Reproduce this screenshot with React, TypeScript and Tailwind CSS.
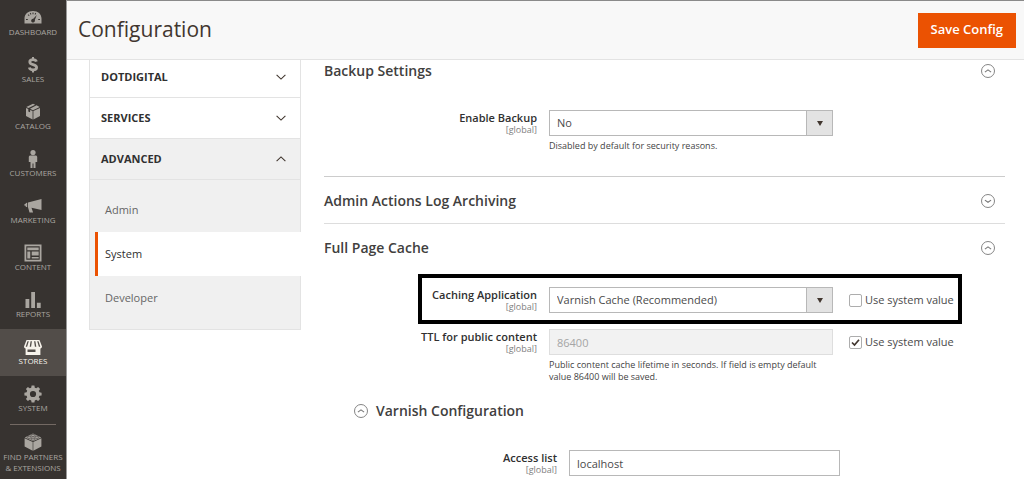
import { useState, type ReactNode } from "react";
import { clsx } from "clsx";

type IconProps = { children: ReactNode };

function Glyph({ children }: IconProps) {
  return (
    <svg viewBox="0 0 18 18" className="h-[18px] w-[18px]" fill="currentColor" aria-hidden="true">
      {children}
    </svg>
  );
}

const icons = {
  dashboard: (
    <Glyph>
      <path
        fillRule="evenodd"
        d="M.5 14.500V9.500C.5 5 4 2 9 2s8.500 3 8.500 7.500v5z M7.200 11.300a1.900 1.900 0 1 0 3.600-.4l2-5-3.500 3.900a1.900 1.900 0 0 0-2.100 1.500z M2 10v1h1.800v-1z M14.200 10v1H16v-1z M8.500 3.500v1.700h1V3.500z M3.700 5.900l1.200 1.200.7-.7-1.200-1.200z M5.800 4.200l.8 1.500.8-.4-.7-1.500z M11.300 3.800l-.7 1.500.8.400.8-1.500z"
      />
    </Glyph>
  ),
  sales: (
    <Glyph>
      <path
        fill="none"
        stroke="currentColor"
        strokeWidth="2.800"
        d="M12.400 5.600C12 4.300 10.700 3.700 9 3.700c-1.900 0-3.200.9-3.200 2.300 0 3.600 6.800 1.700 6.800 5.500 0 1.500-1.400 2.400-3.500 2.400-2 0-3.400-.8-3.800-2.400"
      />
      <path d="M8 1h2v3H8z M8 13.500h2v3H8z" />
    </Glyph>
  ),
  catalog: (
    <Glyph>
      <path d="M9 .8l2.200.9-6.700 3.300L2.300 4z M12.500 2.300L15.700 4 9 7.200 6 5.800z M2 5l2.300 1v2.500l1.800.8V6.900L8.600 8v8.500L2 13z M16 5v8l-6.600 3.500V8z" />
    </Glyph>
  ),
  customers: (
    <Glyph>
      <circle cx="9" cy="2.600" r="2.600" />
      <path d="M6.500 5.600h5c1 0 1.700.6 1.700 1.500v5h-1.700V18H9.500v-4.500h-1V18h-2v-5.900H4.800v-5c0-.9.7-1.500 1.700-1.500z" />
    </Glyph>
  ),
  marketing: (
    <Glyph>
      <path d="M17.500 2v11L7.500 10.800l1.600 4.700H5.500L4 10.300V5.600z M3.200 5.700v4.500L1.700 9.800V8.700H.5V7h1.200V5.900z" />
    </Glyph>
  ),
  content: (
    <Glyph>
      <path fillRule="evenodd" d="M.5.500h17v17H.5z M2.300 2.300v13.400h13.400V2.300z" />
      <path d="M3.300 3.500h11.400v2.700H3.300z M3.300 7.600h3v7h-3z M7.700 7.600h7v4h-7z M7.700 12.900h7v1.700h-7z" />
    </Glyph>
  ),
  reports: (
    <Glyph>
      <path d="M1.500 8h3.800v9H1.500z M7.200 1H11v16H7.200z M12.900 11.800h3.800V17h-3.800z" />
    </Glyph>
  ),
  stores: (
    <Glyph>
      <path
        fillRule="evenodd"
        d="M2.500 2h13l2.500 6.500c0 1-.6 1.700-1.600 1.900V17H1.600v-6.600C.6 10.200 0 9.500 0 8.500z M3.500 3.200L1.700 8.800h1.400l1.700-5.600z M6.600 3.200L5.700 8.800h1.400l.8-5.600z M10.100 3.200l.8 5.600h1.400l-.9-5.600z M13.200 3.200l1.700 5.600h1.400l-1.800-5.600z M3.500 11.500v2.600h8v-2.600z"
      />
    </Glyph>
  ),
  system: (
    <Glyph>
      <path
        fillRule="evenodd"
        d="M7.600.5h2.800l.4 2.200 1.500.6 1.800-1.300 2 2-1.300 1.800.6 1.500 2.200.4v2.700l-2.200.4-.6 1.500 1.300 1.800-2 2-1.800-1.300-1.500.6-.4 2.200H7.600l-.4-2.200-1.500-.6-1.800 1.300-2-2 1.300-1.800-.6-1.500-2.200-.4V7.700l2.200-.4.6-1.500L1.900 4l2-2 1.800 1.300 1.500-.6z M9 5.900a3.100 3.100 0 1 0 0 6.200 3.100 3.100 0 0 0 0-6.200z"
      />
    </Glyph>
  ),
  partners: (
    <Glyph>
      <path d="M.6 5.200L8.700 9v8.700L.6 13.400z M17.400 5.200L9.300 9v8.700l8.100-4.300z" />
      <path d="M.8 4.500L9 .6l8.200 3.900L9 8.300z" />
      <g stroke="#373330" strokeWidth=".6">
        <ellipse cx="9" cy="2.400" rx="2" ry="1.100" />
        <ellipse cx="5.200" cy="4.300" rx="2" ry="1.100" />
        <ellipse cx="12.800" cy="4.300" rx="2" ry="1.100" />
        <ellipse cx="9" cy="6.200" rx="2" ry="1.100" />
      </g>
    </Glyph>
  ),
};

const menu = [
  { label: "Dashboard", icon: icons.dashboard },
  { label: "Sales", icon: icons.sales },
  { label: "Catalog", icon: icons.catalog },
  { label: "Customers", icon: icons.customers },
  { label: "Marketing", icon: icons.marketing },
  { label: "Content", icon: icons.content },
  { label: "Reports", icon: icons.reports },
  { label: "Stores", icon: icons.stores, active: true },
  { label: "System", icon: icons.system },
];

function AdminMenu() {
  return (
    <nav className="w-[67px] shrink-0 border-r border-[#999] bg-[#373330] text-center text-[8px] leading-[10px] text-[#aaa6a0] uppercase">
      {menu.map((m) => (
        <a
          key={m.label}
          href="#"
          className={clsx(
            "flex h-[47px] flex-col items-center pt-[9px]",
            m.active && "bg-[#524d49] text-[#f7f3eb]",
          )}
        >
          {m.icon}
          <span>{m.label}</span>
        </a>
      ))}
      <div className="mx-[10px] mt-px border-t border-[#736963]" />
      <a href="#" className="flex flex-col items-center pt-2 leading-[11px]">
        {icons.partners}
        <span>
          Find Partners
          <br />
          &amp; Extensions
        </span>
      </a>
    </nav>
  );
}

function Chevron({ up }: { up?: boolean }) {
  return (
    <svg viewBox="0 0 10 6" className="h-[6px] w-[10px]" fill="none" stroke="#41362f" strokeWidth="1.100" aria-hidden="true">
      <path d={up ? "M.6 5.200L5 .9l4.400 4.300" : "M.6.8L5 5.100 9.400.8"} />
    </svg>
  );
}

function Toggle({ up }: { up?: boolean }) {
  return (
    <svg viewBox="0 0 14 14" className="h-[14px] w-[14px] shrink-0" fill="none" stroke="#777" aria-hidden="true">
      <circle cx="7" cy="7" r="6.500" strokeWidth=".9" />
      <path d={up ? "M3.900 8.100L7 5.900l3.100 2.200" : "M3.900 6.100L7 8.300l3.100-2.200"} strokeWidth="1.100" />
    </svg>
  );
}

function ConfigTabs() {
  return (
    <nav className="-mt-1 w-[212px] shrink-0 border border-[#e3e3e3] text-[#303030]">
      {["Dotdigital", "Services", "Advanced"].map((t) => {
        const open = t === "Advanced";
        return (
          <button
            key={t}
            aria-expanded={open}
            className={clsx(
              "flex h-[41px] w-full items-center justify-between border-b border-[#e3e3e3] pr-[14px] pl-[11px] text-[11px] font-bold uppercase",
              open && "bg-[#f0f0f0]",
            )}
          >
            {t}
            <Chevron up={open} />
          </button>
        );
      })}
      <ul className="bg-[#f0f0f0] pt-2 pb-[9px] text-[11px]">
        {["Admin", "System", "Developer"].map((t) => (
          <li key={t}>
            <a
              href="#"
              className={clsx(
                "ml-[5px] flex h-11 items-center border-l-3 pl-[7px]",
                t === "System"
                  ? "-mr-px border-[#eb5202] bg-white text-[#303030]"
                  : "border-transparent text-[#666]",
              )}
            >
              {t}
            </a>
          </li>
        ))}
      </ul>
    </nav>
  );
}

function SectionHead({ title, up }: { title: string; up?: boolean }) {
  return (
    <h2>
      <button className="flex w-full items-center justify-between pr-[10px] text-left text-[14px] leading-[20px] font-semibold text-[#41403e]">
        {title}
        <Toggle up={up} />
      </button>
    </h2>
  );
}

type FieldProps = {
  id: string;
  label: string;
  note?: string;
  nested?: boolean;
  marked?: boolean;
  system?: boolean;
  onSystem?: (v: boolean) => void;
  children: ReactNode;
};

function Field({ id, label, note, nested, marked, system, onSystem, children }: FieldProps) {
  return (
    <div
      className={clsx(
        "relative grid gap-x-3",
        nested ? "grid-cols-[203fr_271fr_153fr]" : "grid-cols-[213fr_284fr_160fr]",
      )}
    >
      {marked && (
        <div className="pointer-events-none absolute -top-[13px] right-[43px] -bottom-[11px] left-[94px] border-4 border-black" />
      )}
      <label htmlFor={id} className="pt-px text-right text-[11px] leading-[14px] font-semibold text-[#303030]">
        {label}
        <span className="block text-[9px] leading-[9px] font-normal text-[#808080]">[global]</span>
      </label>
      <div>
        {children}
        {note && <p className="mt-1 text-[9px] leading-[12px] text-[#444]">{note}</p>}
      </div>
      {onSystem && (
        <label className="flex h-[26px] items-center gap-[3px] pl-1 text-[11px] text-[#4a4a4a]">
          <span className="relative flex">
            <input
              type="checkbox"
              checked={system}
              onChange={(e) => onSystem(e.target.checked)}
              className="h-[13px] w-[13px] appearance-none rounded-[2px] border border-[#adadad] bg-white"
            />
            {system && (
              <svg viewBox="0 0 13 13" className="pointer-events-none absolute inset-0" fill="none" stroke="#41362f" strokeWidth="1.700" aria-hidden="true">
                <path d="M3 6.500l2.500 2.500L10 3.800" />
              </svg>
            )}
          </span>
          Use system value
        </label>
      )}
    </div>
  );
}

function Select({ id, options }: { id: string; options: string[] }) {
  return (
    <div className="relative">
      <select
        id={id}
        className="block h-[26px] w-full appearance-none border border-[#b8b8b8] bg-white pr-8 pl-[7px] text-[11px] text-[#4a4a4a]"
      >
        {options.map((o) => (
          <option key={o}>{o}</option>
        ))}
      </select>
      <span className="pointer-events-none absolute inset-y-0 right-0 flex w-[27px] items-center justify-center border border-[#b8b8b8] bg-[#e3e3e3]">
        <svg viewBox="0 0 6 5" className="h-[5px] w-[6px]" fill="#41362f" aria-hidden="true">
          <path d="M0 0h6L3 5z" />
        </svg>
      </span>
    </div>
  );
}

export default function App() {
  const [cacheSystem, setCacheSystem] = useState(false);
  const [ttlSystem, setTtlSystem] = useState(true);

  return (
    <div className="flex min-h-screen bg-white font-['Open_Sans',sans-serif]">
      <AdminMenu />
      <div className="min-w-0 flex-1">
        <header className="relative z-10 flex h-[60px] items-center justify-between border-t border-b border-t-[#8a8a8a] border-b-[#e3e3e3] bg-[#f8f8f8] pr-2 pl-[11px]">
          <h1 className="text-[21px] text-[#41362f]">Configuration</h1>
          <button className="h-[35px] bg-[#eb5202] px-[13px] text-[13px] font-semibold text-white">Save Config</button>
        </header>
        <div className="flex items-start gap-[23px] pr-[19px] pl-[22px]">
          <ConfigTabs />
          <main className="min-w-0 flex-1">
            <section className="border-b border-[#ccc] pt-px pb-6">
              <SectionHead title="Backup Settings" up />
              <div className="mt-[29px]">
                <Field id="backup" label="Enable Backup" note="Disabled by default for security reasons.">
                  <Select id="backup" options={["No", "Yes"]} />
                </Field>
              </div>
            </section>
            <section className="border-b border-[#ddd] pt-[14px] pb-3">
              <SectionHead title="Admin Actions Log Archiving" />
            </section>
            <section className="pt-[14px]">
              <SectionHead title="Full Page Cache" up />
              <div className="mt-[29px] flex flex-col gap-4">
                <Field id="cache" label="Caching Application" marked system={cacheSystem} onSystem={setCacheSystem}>
                  <Select id="cache" options={["Varnish Cache (Recommended)", "Built-in Cache"]} />
                </Field>
                <Field
                  id="ttl"
                  label="TTL for public content"
                  note="Public content cache lifetime in seconds. If field is empty default value 86400 will be saved."
                  system={ttlSystem}
                  onSystem={setTtlSystem}
                >
                  <input
                    id="ttl"
                    defaultValue="86400"
                    disabled={ttlSystem}
                    className="block h-[26px] w-full border border-[#b8b8b8] px-[7px] text-[11px] text-[#4a4a4a] disabled:border-[#dedede] disabled:bg-[#f2f2f2] disabled:text-[#a5a5a5]"
                  />
                </Field>
              </div>
              <div className="mt-[18px] pl-[30px]">
                <h3>
                  <button className="flex items-center gap-2 text-[14px] leading-[20px] font-semibold text-[#41403e]">
                    <Toggle up />
                    Varnish Configuration
                  </button>
                </h3>
                <div className="mt-[29px]">
                  <Field id="access" label="Access list" nested>
                    <input
                      id="access"
                      defaultValue="localhost"
                      className="block h-[26px] w-full border border-[#b8b8b8] px-[7px] text-[11px] text-[#4a4a4a]"
                    />
                  </Field>
                </div>
              </div>
            </section>
          </main>
        </div>
      </div>
    </div>
  );
}
